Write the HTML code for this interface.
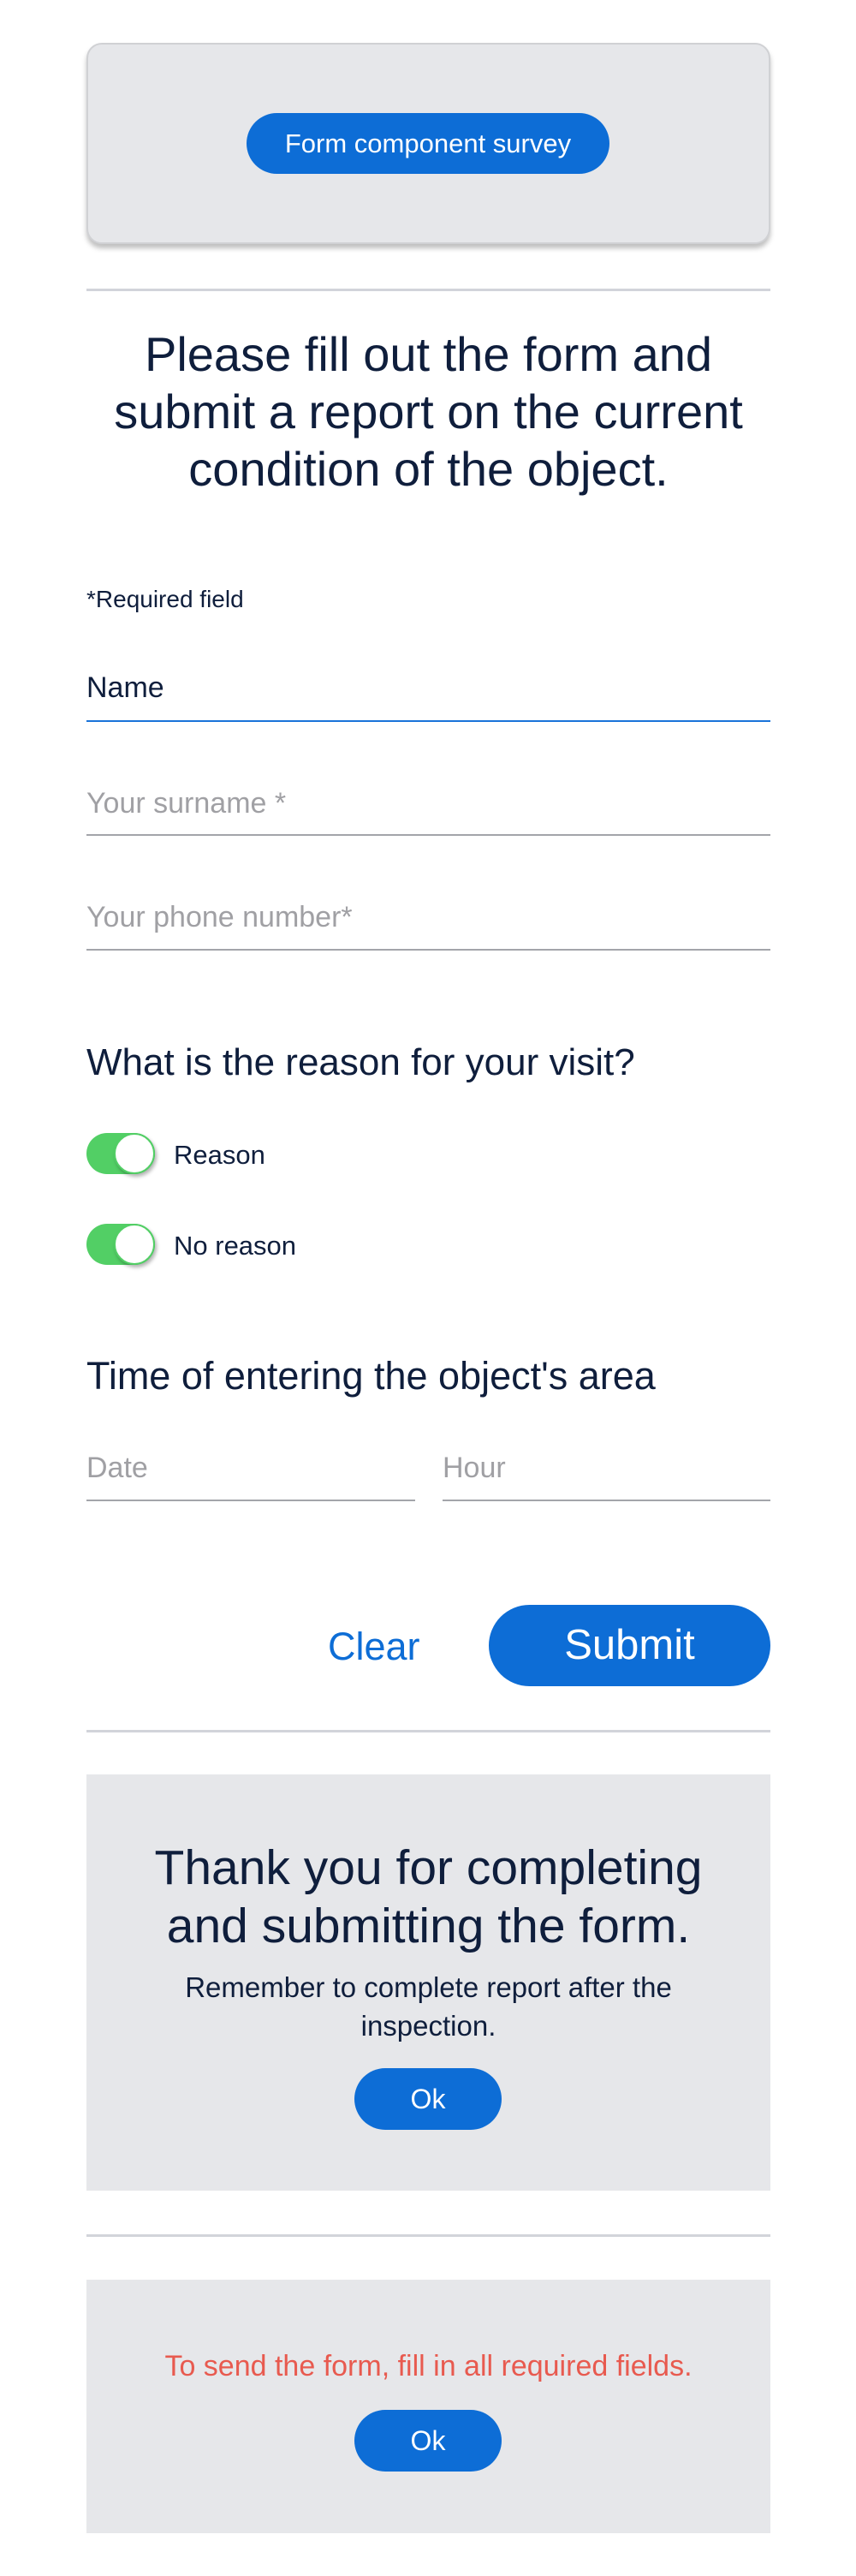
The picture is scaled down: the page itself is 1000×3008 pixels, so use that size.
<!DOCTYPE html>
<html><head><meta charset="utf-8">
<style>
*{margin:0;padding:0;box-sizing:border-box}
html,body{width:1000px;height:3008px;background:#fff;overflow:hidden}
body{position:relative;font-family:"Liberation Sans","DejaVu Sans",sans-serif;color:#0f1e3c}
.a{position:absolute;line-height:1;white-space:nowrap}
.btn{position:absolute;background:#0d6dd6;color:#fff;border-radius:40px;text-align:center}
.line{position:absolute;height:2px;background:#a3a5aa}
.div{position:absolute;left:101px;width:799px;height:3px;background:#d2d4da}
.ph{position:absolute;color:#a0a0a4;font-size:34px;line-height:1;white-space:nowrap}
.tog{position:absolute;left:101px;width:80px;height:48px;background:#52cf65;border-radius:24px}
.tog i{position:absolute;right:0;top:0;width:48px;height:48px;border-radius:50%;background:#fff;border:2px solid #52cf65;box-shadow:2px 3px 4px rgba(0,0,0,.3)}
.lbl{position:absolute;left:203px;font-size:31px;line-height:1;white-space:nowrap}
</style></head><body>
<div class="a" style="left:101px;top:50px;width:799px;height:235px;background:#e6e7ea;border:2px solid #d0d1d4;border-radius:18px;box-shadow:0 5px 6px rgba(0,0,0,.25)"></div>
<div class="btn" style="left:288px;top:132px;width:424px;height:71px;line-height:71px;font-size:31px">Form component survey</div>
<div class="div" style="top:337px"></div>
<div class="a" style="left:101px;width:799px;top:380px;text-align:center;font-size:56px;line-height:67px;white-space:normal">Please fill out the form and<br>submit a report on the current<br>condition of the object.</div>
<div class="a" style="left:101px;top:686px;font-size:28px">*Required field</div>
<div class="a" style="left:101px;top:786px;font-size:34px">Name</div>
<div class="line" style="left:101px;width:799px;top:841px;background:#1a73d9"></div>
<div class="ph" style="left:101px;top:921px">Your surname *</div>
<div class="line" style="left:101px;width:799px;top:974px"></div>
<div class="ph" style="left:101px;top:1054px">Your phone number*</div>
<div class="line" style="left:101px;width:799px;top:1108px"></div>
<div class="a" style="left:101px;top:1219px;font-size:44px">What is the reason for your visit?</div>
<div class="tog" style="top:1323px"><i></i></div>
<div class="lbl" style="top:1333px">Reason</div>
<div class="tog" style="top:1429px"><i></i></div>
<div class="lbl" style="top:1439px">No reason</div>
<div class="a" style="left:101px;top:1584px;font-size:45px">Time of entering the object's area</div>
<div class="ph" style="left:101px;top:1697px">Date</div>
<div class="line" style="left:101px;width:384px;top:1751px"></div>
<div class="ph" style="left:517px;top:1697px">Hour</div>
<div class="line" style="left:517px;width:383px;top:1751px"></div>
<div class="a" style="left:383px;top:1900px;font-size:45px;color:#0d6dd6">Clear</div>
<div class="btn" style="left:571px;top:1874px;width:329px;height:95px;line-height:95px;font-size:49px;border-radius:48px">Submit</div>
<div class="div" style="top:2020px"></div>
<div class="a" style="left:101px;top:2072px;width:799px;height:486px;background:#e6e7ea"></div>
<div class="a" style="left:101px;width:799px;top:2147px;text-align:center;font-size:57px;line-height:68px">Thank you for completing<br>and submitting the form.</div>
<div class="a" style="left:101px;width:799px;top:2298px;text-align:center;font-size:33px;line-height:45px">Remember to complete report after the<br>inspection.</div>
<div class="btn" style="left:414px;top:2415px;width:172px;height:72px;line-height:72px;font-size:32px">Ok</div>
<div class="div" style="top:2609px"></div>
<div class="a" style="left:101px;top:2662px;width:799px;height:296px;background:#e6e7ea"></div>
<div class="a" style="left:101px;width:799px;top:2746px;text-align:center;font-size:34px;color:#e85a4f">To send the form, fill in all required fields.</div>
<div class="btn" style="left:414px;top:2814px;width:172px;height:72px;line-height:72px;font-size:32px">Ok</div>
</body></html>
